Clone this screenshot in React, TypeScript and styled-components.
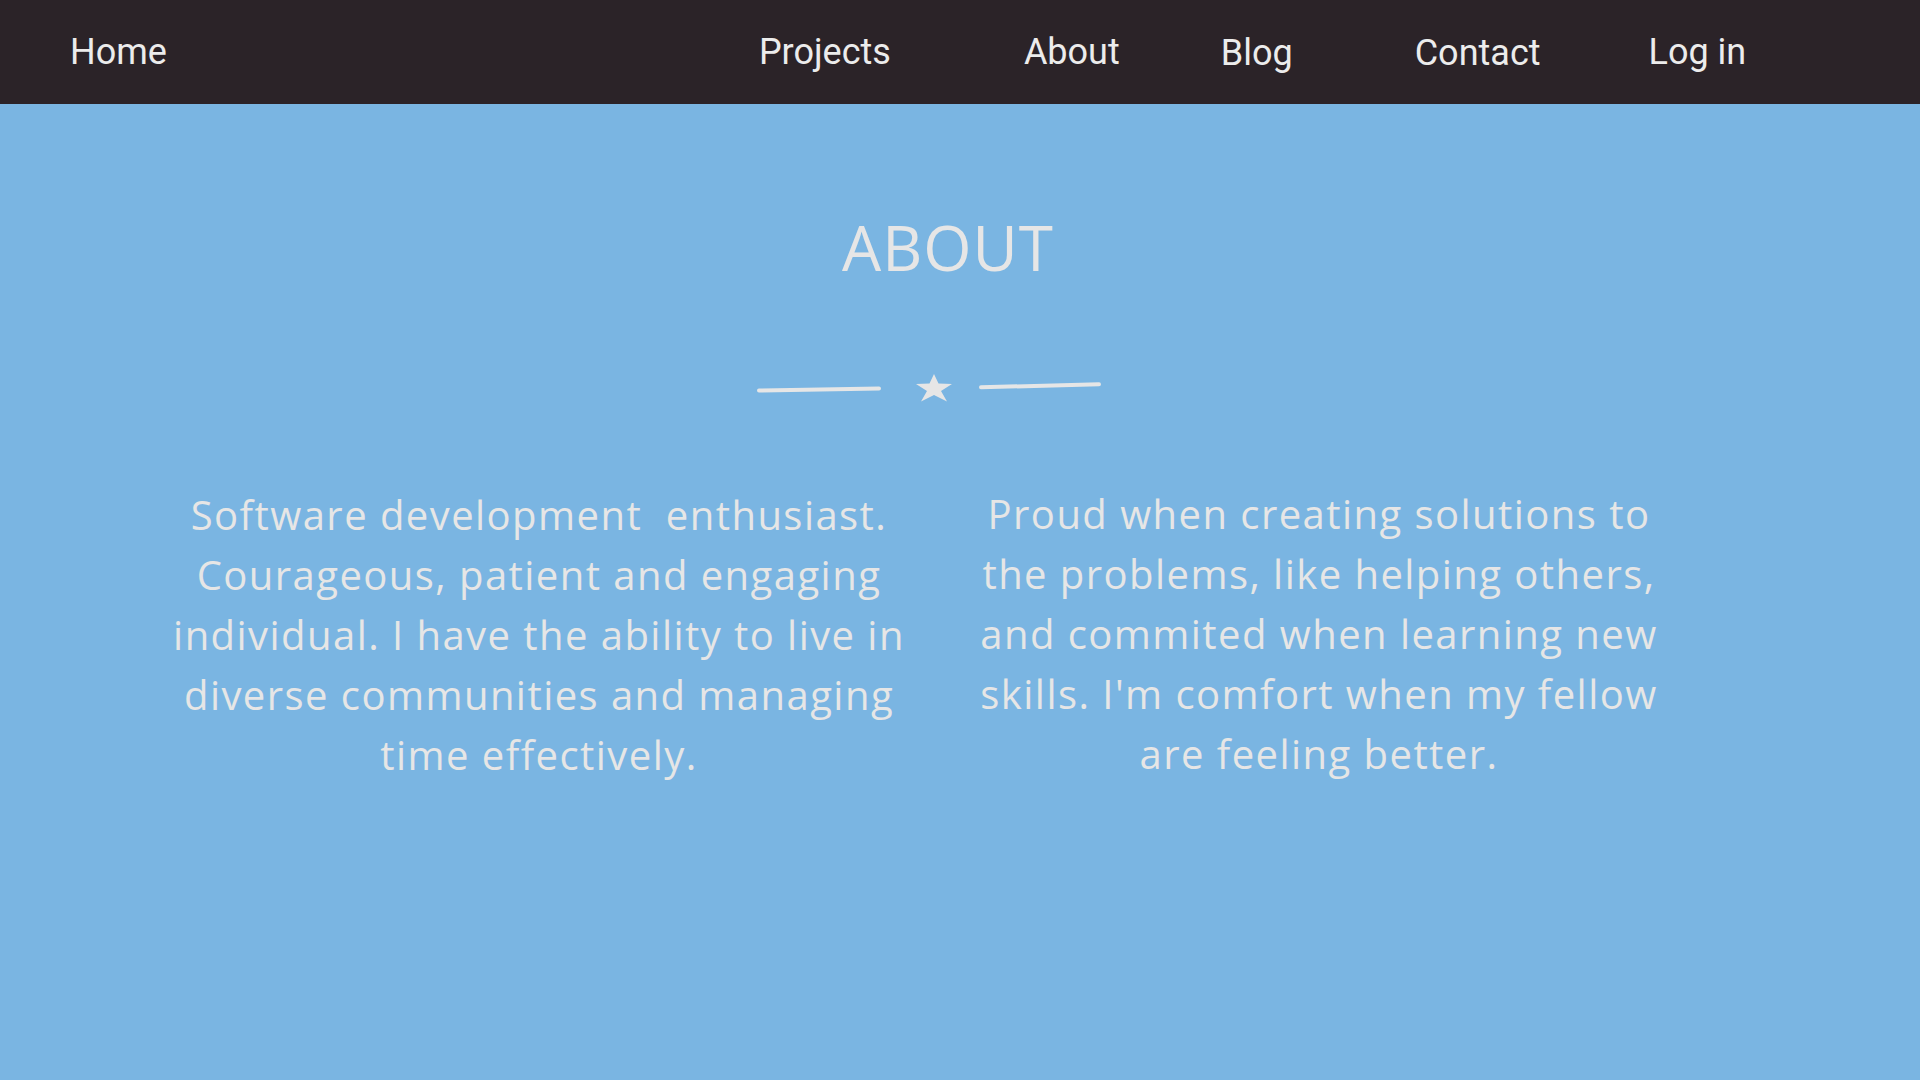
import React from "react";
import styled, { createGlobalStyle } from "styled-components";

const GlobalStyle = createGlobalStyle`
  html, body {
    margin: 0;
    padding: 0;
    background: #7ab5e2;
  }
  #root {
    min-height: 100vh;
  }
`;

const Page = styled.div`
  min-height: 100vh;
  display: flex;
  flex-direction: column;
  background: #7ab5e2;
`;

const NavBar = styled.nav`
  height: 104px;
  background: #2b2328;
  display: flex;
  align-items: center;
  padding-left: 70px;
  box-sizing: border-box;
`;

const NavLink = styled.a<{ $gap?: number; $drop?: number }>`
  font-family: Roboto, "Liberation Sans", sans-serif;
  font-size: 36px;
  font-weight: 400;
  color: #ececec;
  text-decoration: none;
  margin-left: ${(p) => p.$gap ?? 0}px;
  margin-top: ${(p) => (p.$drop ?? 0) * 2}px;
  line-height: 1;
  cursor: pointer;
`;

const Main = styled.main`
  flex: 1;
  display: flex;
  flex-direction: column;
  align-items: stretch;
  padding-top: 112px;
`;

const Heading = styled.h1`
  margin: 0;
  padding-right: 24px;
  text-align: center;
  font-family: "Open Sans", "Noto Sans", sans-serif;
  font-weight: 400;
  font-size: 62px;
  letter-spacing: 1px;
  line-height: 1;
  color: #e6e6e6;
`;

const DividerRow = styled.div`
  display: flex;
  justify-content: center;
  padding-right: 62px;
  margin-top: 95px;
`;

const Columns = styled.div`
  display: flex;
  margin-top: 82px;
  padding-left: 164px;
  gap: 55px;
`;

const Paragraph = styled.p<{ $width: number; $lift?: number }>`
  margin: 0;
  margin-top: ${(p) => -(p.$lift ?? 0)}px;
  width: ${(p) => p.$width}px;
  text-align: center;
  font-family: "Open Sans", "Noto Sans", sans-serif;
  font-weight: 400;
  font-size: 40px;
  letter-spacing: 1.45px;
  line-height: 60px;
  color: #e6e6e6;
  white-space: nowrap;
`;

const Divider = () => (
  <svg width="346" height="30" viewBox="0 0 346 30" aria-hidden="true">
    <line x1="3" y1="17.5" x2="123" y2="15.5" stroke="#e6e6e6" strokeWidth="4" strokeLinecap="round" />
    <polygon
      points="178,1 182.5,10.5 196,11 185,18 191,28.5 178,22 165,28.5 171,18 160,11 173.5,10.5"
      fill="#e6e6e6"
    />
    <line x1="225" y1="14.3" x2="343" y2="11.3" stroke="#e6e6e6" strokeWidth="4" strokeLinecap="round" />
  </svg>
);

export default function App() {
  return (
    <>
      <GlobalStyle />
      <Page>
        <NavBar>
          <NavLink>Home</NavLink>
          <NavLink $gap={592}>Projects</NavLink>
          <NavLink $gap={133}>About</NavLink>
          <NavLink $gap={101} $drop={1}>Blog</NavLink>
          <NavLink $gap={122} $drop={1}>Contact</NavLink>
          <NavLink $gap={108}>Log in</NavLink>
        </NavBar>
        <Main>
          <Heading>ABOUT</Heading>
          <DividerRow>
            <Divider />
          </DividerRow>
          <Columns>
            <Paragraph $width={750}>
              Software development&nbsp; enthusiast.
              <br />
              Courageous, patient and engaging
              <br />
              individual. I have the ability to live in
              <br />
              diverse communities and managing
              <br />
              time effectively.
            </Paragraph>
            <Paragraph $width={700} $lift={1}>
              Proud when creating solutions to
              <br />
              the problems, like helping others,
              <br />
              and commited when learning new
              <br />
              skills. I'm comfort when my fellow
              <br />
              are feeling better.
            </Paragraph>
          </Columns>
        </Main>
      </Page>
    </>
  );
}
